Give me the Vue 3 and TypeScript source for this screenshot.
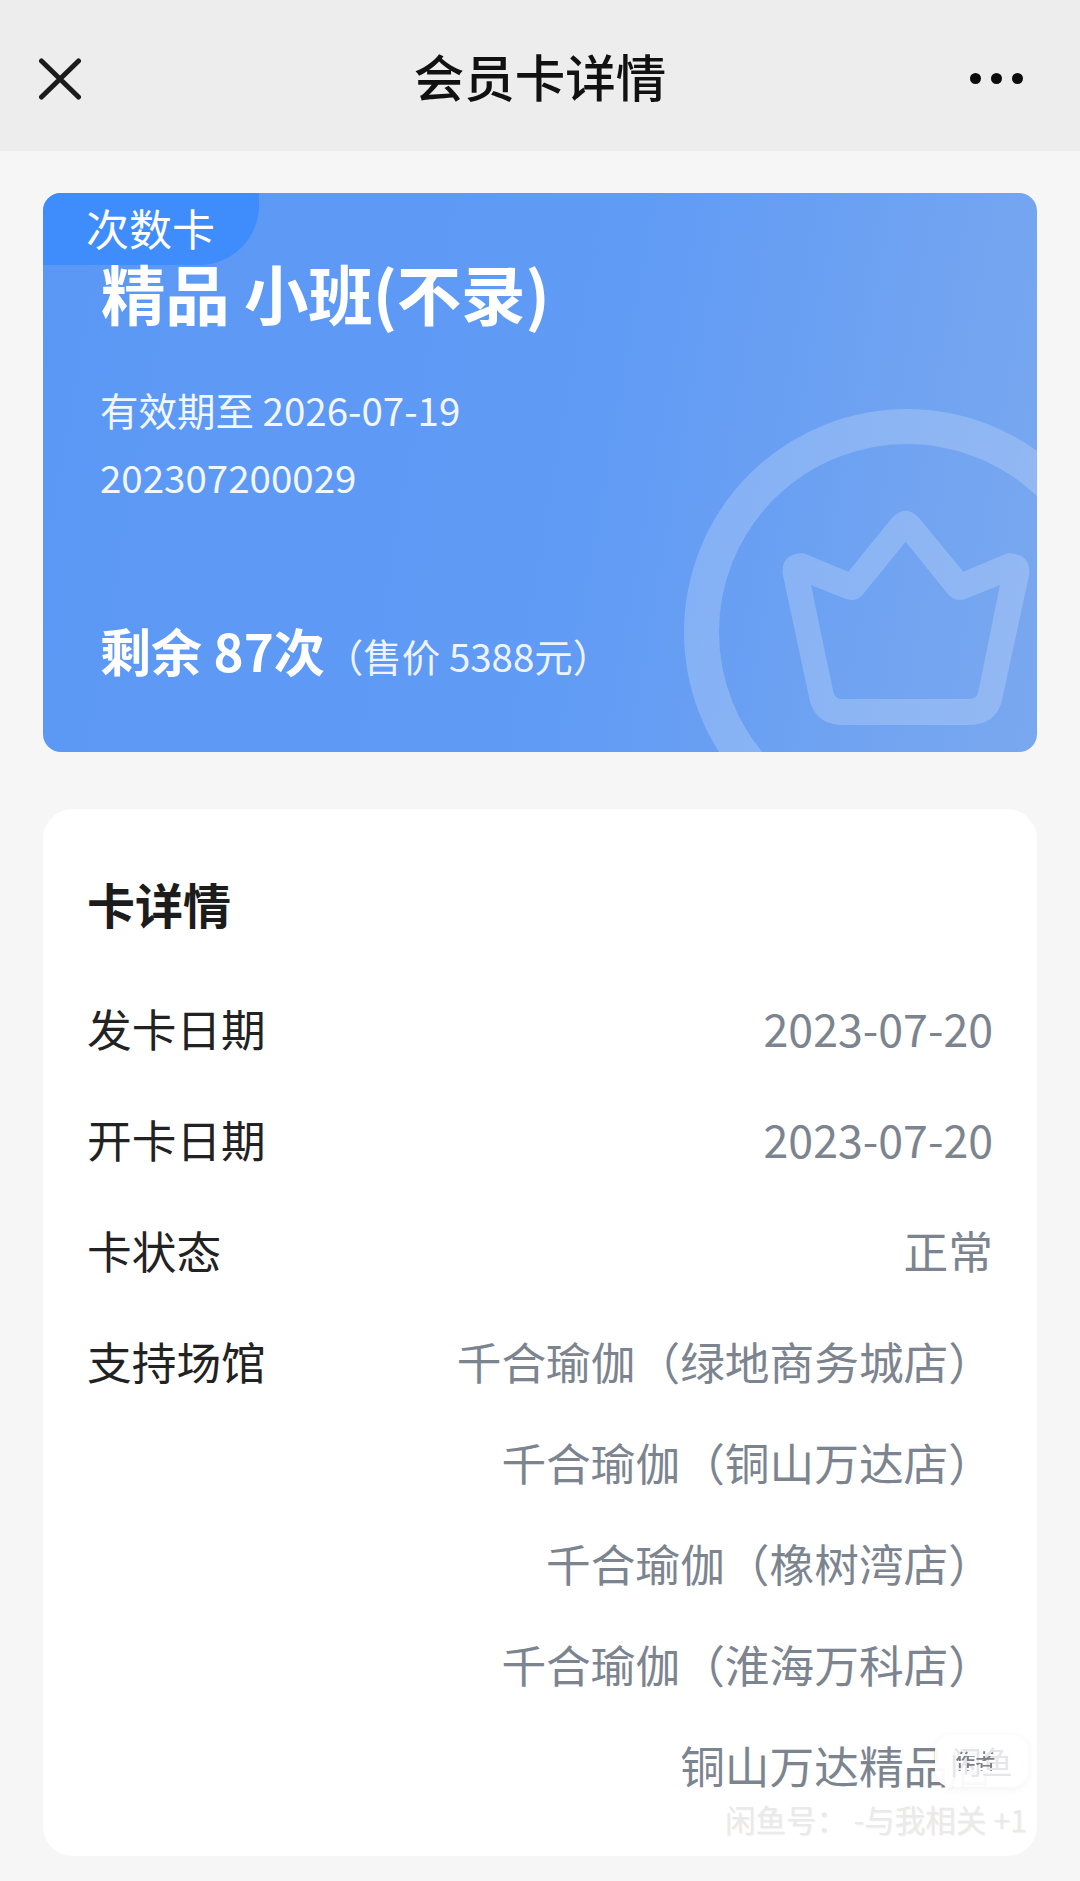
<script setup lang="ts">
const rows = [
  { label: '发卡日期', value: '2023-07-20' },
  { label: '开卡日期', value: '2023-07-20' },
  { label: '卡状态', value: '正常' },
]
const venues = [
  '千合瑜伽（绿地商务城店）',
  '千合瑜伽（铜山万达店）',
  '千合瑜伽（橡树湾店）',
  '千合瑜伽（淮海万科店）',
  '铜山万达精品店',
]
</script>

<template>
  <div class="page">
    <header class="nav">
      <svg class="close" width="42" height="42" viewBox="0 0 42 42" fill="none" stroke="#1c1c1c" stroke-width="5" stroke-linecap="round">
        <path d="M2.5 3 L39.5 39 M39.5 3 L2.5 39" />
      </svg>
      <div class="nav-title">会员卡详情</div>
      <div class="dots"><i></i><i></i><i></i></div>
    </header>

    <main class="main">
      <section class="vip">
        <svg class="crown" width="994" height="559" viewBox="43 193 994 559" fill="none">
          <circle cx="907" cy="632" r="205.5" stroke="#fff" stroke-opacity="0.2" stroke-width="35" />
          <path
            fill="#fff"
            fill-opacity="0.2"
            fill-rule="evenodd"
            d="M800.7 553.3 Q804 553 808 555 L848.3 571.7 L891.7 518.3 Q905.7 503 919.3 518.3 L963.3 571.7 L1003 555 Q1007 553 1010 553.3 Q1031 555 1029.3 574 L1001.7 701.7 Q995 725 968.3 725 L843.3 725 Q817 725 810 701.7 L782.7 574 Q781 555 800.7 553.3 Z
               M811 585 L833.3 691.7 Q835 699 841.7 699 L970 699 Q976.5 699 978.3 691.7 L1000 585 L965 599 Q954 603 946 591.7 L905.7 541.7 L865 591.7 Q858 603 846 599 Z"
          />
        </svg>
        <div class="tag">次数卡</div>
        <h1 class="vip-title">精品 小班(不录)</h1>
        <div class="vip-line first">有效期至 2026-07-19</div>
        <div class="vip-line">202307200029</div>
        <div class="remain"><strong>剩余 87次</strong><span>（售价 5388元）</span></div>
      </section>

      <section class="detail">
        <h2>卡详情</h2>
        <div v-for="r in rows" :key="r.label" class="row">
          <span class="label">{{ r.label }}</span>
          <span class="value">{{ r.value }}</span>
        </div>
        <div class="row venues-row">
          <span class="label">支持场馆</span>
          <div class="venues">
            <div v-for="v in venues" :key="v">{{ v }}</div>
          </div>
        </div>
        <div class="badge">
          <span class="badge-back">闲鱼</span>
          <span class="badge-front">作者</span>
        </div>
        <div class="mark">闲鱼号： -与我相关 +1</div>
      </section>
    </main>
  </div>
</template>

<style scoped>
.page {
  width: 1080px;
  height: 1881px;
  overflow: hidden;
  background: #f6f6f6;
  font-family: "Noto Sans CJK SC", "Noto Sans", sans-serif;
  color: #1c1c1c;
}
.nav {
  height: 151px;
  box-sizing: border-box;
  background: #ededed;
  display: flex;
  align-items: center;
  justify-content: space-between;
  padding: 6px 57px 0 39px;
  position: relative;
}
.close { display: block; }
.nav-title {
  position: absolute;
  left: 0;
  right: 0;
  padding-bottom: 8px;
  text-align: center;
  font-size: 50.5px;
  line-height: 60px;
  font-weight: 500;
  color: #111;
}
.dots { display: flex; gap: 10px; }
.dots i {
  display: block;
  width: 11px;
  height: 11px;
  border-radius: 50%;
  background: #0c0c0c;
}
.main { padding: 42px 43px 0; }
.vip {
  position: relative;
  height: 559px;
  box-sizing: border-box;
  padding: 46px 0 0 57px;
  border-radius: 18px;
  overflow: hidden;
  background: linear-gradient(100deg, #5b98f5 0%, #609bf5 55%, #7aa8ef 100%);
  color: #fff;
}
.crown { position: absolute; left: 0; top: 0; }
.tag {
  position: absolute;
  left: 0;
  top: 0;
  width: 216px;
  height: 72px;
  box-sizing: border-box;
  padding-left: 43px;
  background: #3f8cfd;
  border-bottom-right-radius: 60px;
  font-size: 43px;
  line-height: 68px;
}
.vip-title {
  position: relative;
  margin: -4px 0 0 1px;
  font-size: 64.5px;
  line-height: 114px;
  height: 114px;
  font-weight: 700;
  letter-spacing: -0.2px;
}
.vip-line {
  position: relative;
  font-size: 38.5px;
  line-height: 67px;
  color: #f1f6ff;
}
.vip-line.first { margin-top: 27px; }
.remain {
  position: relative;
  margin-top: 102px;
  line-height: 76px;
  display: flex;
  align-items: baseline;
}
.remain strong { font-size: 51px; font-weight: 700; }
.remain span { font-size: 38.5px; color: #eef4ff; }
.detail {
  position: relative;
  margin-top: 57px;
  height: 1047px;
  box-sizing: border-box;
  padding: 58px 44px 0;
  background: #fff;
  border-radius: 30px;
  overflow: hidden;
}
.detail h2 {
  margin: 0 0 33px;
  font-size: 48px;
  line-height: 72px;
  font-weight: 700;
  color: #1c1c1c;
}
.row {
  display: flex;
  justify-content: space-between;
  height: 111px;
  align-items: center;
  font-size: 44.7px;
}
.label { color: #222; }
.value { color: #7c8490; }
.venues-row { height: auto; align-items: flex-start; }
.venues-row .label { line-height: 111px; height: 101px; }
.venues {
  text-align: right;
  color: #7c8490;
  font-size: 44.7px;
  line-height: 101px;
  padding-top: 5px;
}
.badge {
  position: absolute;
  left: 892px;
  top: 926px;
  width: 93px;
  height: 52px;
  border-radius: 16px;
  background: rgba(255, 255, 255, 0.96);
  box-shadow: 0 2px 10px rgba(0, 0, 0, 0.05);
  display: grid;
  place-items: center;
}
.badge > span { grid-area: 1 / 1; white-space: nowrap; }
.badge-back {
  font-size: 31px;
  line-height: 52px;
  color: #e6e6e8;
}
.badge-front {
  font-size: 20px;
  line-height: 52px;
  color: #7a7f88;
  font-weight: 500;
  -webkit-mask-image: repeating-linear-gradient(180deg, #000 0 5px, transparent 5px 7px);
  mask-image: repeating-linear-gradient(180deg, #000 0 5px, transparent 5px 7px);
  margin-right: 12px;
}
.mark {
  position: absolute;
  right: 10px;
  bottom: 19px;
  font-size: 30.5px;
  line-height: 36px;
  color: #eaeaea;
  text-shadow: 1px 1px 1px rgba(0, 0, 0, 0.06);
  white-space: nowrap;
}
</style>

<style>
html, body { margin: 0; background: #f6f6f6; }
</style>
